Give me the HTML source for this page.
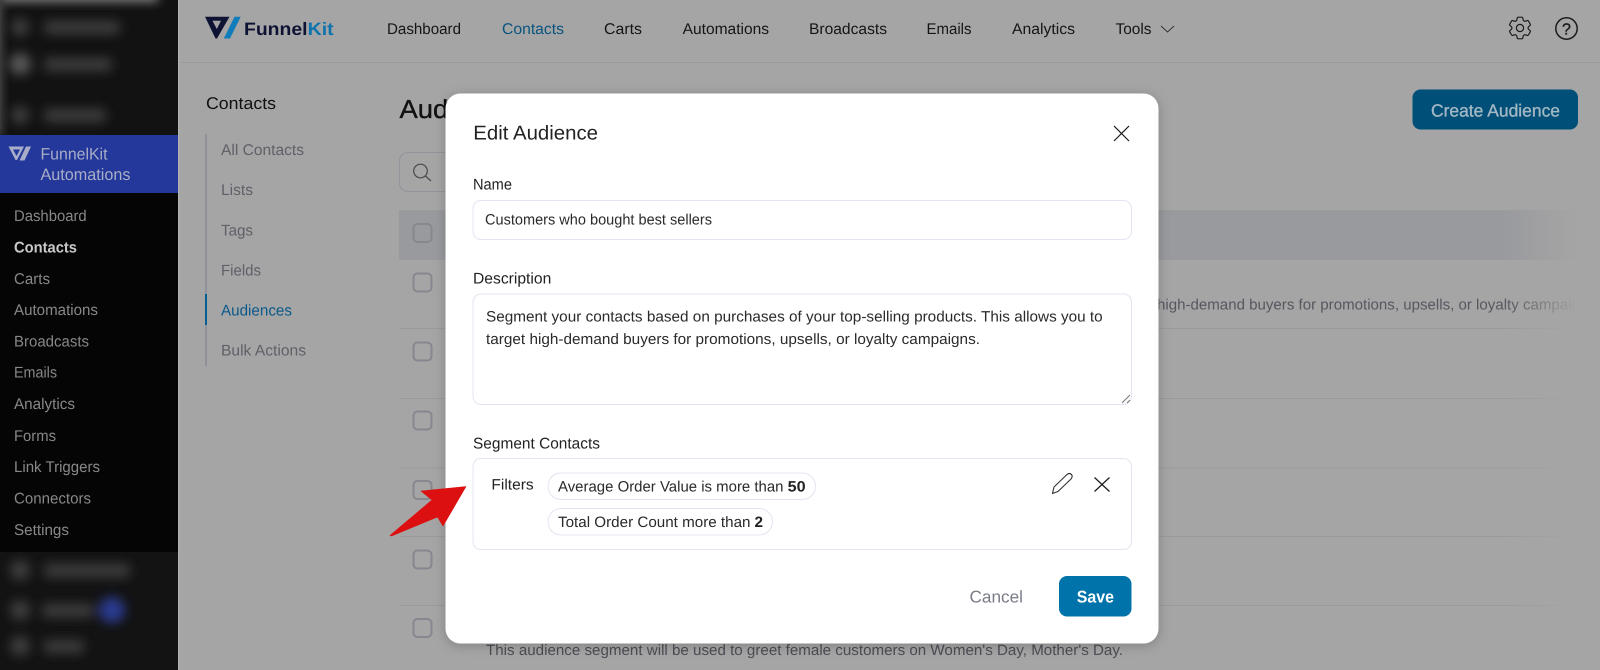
<!DOCTYPE html>
<html><head><meta charset="utf-8"><title>Edit Audience</title>
<style>
html,body{margin:0;padding:0;width:1600px;height:670px;overflow:hidden;background:#a5a5a5}
svg{display:block}
text{font-family:"Liberation Sans",sans-serif;white-space:pre;text-rendering:geometricPrecision}
</style></head><body>
<svg xmlns="http://www.w3.org/2000/svg" width="1600" height="670" viewBox="0 0 1600 670">
<defs>
<filter id="b" x="-30%" y="-30%" width="160%" height="160%"><feGaussianBlur stdDeviation="5.500"/></filter>
<filter id="b2" x="-60%" y="-60%" width="220%" height="220%"><feGaussianBlur stdDeviation="5"/></filter>
<filter id="sh" x="-10%" y="-10%" width="120%" height="120%"><feDropShadow dx="0" dy="2" stdDeviation="6" flood-color="#000" flood-opacity=".22"/></filter>
<clipPath id="top"><rect width="178" height="135"/></clipPath>
<linearGradient id="hd" gradientUnits="userSpaceOnUse" x1="1500" y1="0" x2="1578" y2="0"><stop offset="0" stop-color="#999a9e"/><stop offset="1" stop-color="#a5a5a5"/></linearGradient>
<linearGradient id="ln" gradientUnits="userSpaceOnUse" x1="1500" y1="0" x2="1575" y2="0"><stop offset="0" stop-color="#9a9a9d"/><stop offset="1" stop-color="#a5a5a5"/></linearGradient>
<linearGradient id="tx" gradientUnits="userSpaceOnUse" x1="1505" y1="0" x2="1578" y2="0"><stop offset="0" stop-color="#56575f"/><stop offset="1" stop-color="#a5a5a5"/></linearGradient>
</defs>

<!-- main background -->
<rect width="1600" height="670" fill="#a5a5a5"/>
<rect x="178" y="62" width="1422" height="1" fill="#9b9b9d"/>

<!-- sidebar -->
<rect width="178" height="670" fill="#050505"/>
<rect x="178" width="1.500" height="670" fill="#b0b0b0"/>
<rect width="178" height="135" fill="#121212"/>
<g clip-path="url(#top)">
<rect x="0" y="-12" width="158" height="14" fill="#808080" filter="url(#b2)"/>
<rect x="-12" y="0" width="13" height="135" fill="#5a5a5a" filter="url(#b2)"/>
</g>
<g fill="#3c3c3c" filter="url(#b)">
<circle cx="20" cy="27" r="9"/><rect x="44" y="21" width="76" height="13" rx="4"/>
<circle cx="20" cy="64" r="11" fill="#575757"/><rect x="44" y="58" width="68" height="13" rx="4"/>
<circle cx="20" cy="115" r="9"/><rect x="44" y="109" width="62" height="13" rx="4"/>
</g>
<rect y="135" width="178" height="58" fill="#23389a"/>
<path d="M8.500 146.500H24L17 160H15.500ZM13 149.500L16.500 156L20 149.500Z" fill="#a9adc8" fill-rule="evenodd"/>
<path d="M26 146.500H31L24.500 160.500H19.500Z" fill="#a9adc8"/>
<text x="40.500" y="159.500" font-size="16.500" fill="#a9adc6" textLength="67" lengthAdjust="spacingAndGlyphs">FunnelKit</text>
<text x="40.500" y="180" font-size="16.500" fill="#a9adc6" textLength="90" lengthAdjust="spacingAndGlyphs">Automations</text>
<g font-size="15.500" fill="#888">
<text x="14" y="221" textLength="72.700" lengthAdjust="spacingAndGlyphs">Dashboard</text>
<text x="14" y="252.500" font-weight="700" fill="#c9c9c9" textLength="63" lengthAdjust="spacingAndGlyphs">Contacts</text>
<text x="14" y="284" textLength="36" lengthAdjust="spacingAndGlyphs">Carts</text>
<text x="14" y="315" textLength="84" lengthAdjust="spacingAndGlyphs">Automations</text>
<text x="14" y="346.500" textLength="75" lengthAdjust="spacingAndGlyphs">Broadcasts</text>
<text x="14" y="377.700" textLength="43" lengthAdjust="spacingAndGlyphs">Emails</text>
<text x="14" y="409" textLength="61" lengthAdjust="spacingAndGlyphs">Analytics</text>
<text x="14" y="441" textLength="42" lengthAdjust="spacingAndGlyphs">Forms</text>
<text x="14" y="472" textLength="86" lengthAdjust="spacingAndGlyphs">Link Triggers</text>
<text x="14" y="503.500" textLength="77" lengthAdjust="spacingAndGlyphs">Connectors</text>
<text x="14" y="535" textLength="55" lengthAdjust="spacingAndGlyphs">Settings</text>
</g>
<rect y="552" width="178" height="118" fill="#131313"/>
<g fill="#3c3c3c" filter="url(#b)">
<circle cx="20" cy="570" r="10"/><rect x="44" y="564" width="86" height="13" rx="4"/>
<circle cx="20" cy="610" r="10"/><rect x="42" y="604" width="52" height="13" rx="4"/>
<circle cx="112" cy="610" r="13" fill="#2b3a90"/>
<circle cx="20" cy="646" r="10"/><rect x="44" y="640" width="40" height="13" rx="4"/>
</g>

<!-- top nav -->
<path d="M205 16.700H229.500L217 38.500H215.500ZM212.500 20.800L216.800 29L221 20.800Z" fill="#0e1333" fill-rule="evenodd"/>
<path d="M234.500 16.700H240.700L230 38.500H223.800Z" fill="#0f7dbb"/>
<text x="244" y="35" font-size="18" font-weight="700" fill="#0e1333" textLength="63.500" lengthAdjust="spacingAndGlyphs">Funnel</text>
<text x="307.700" y="35" font-size="18" font-weight="700" fill="#0d73ad" textLength="26" lengthAdjust="spacingAndGlyphs">Kit</text>
<g font-size="15.500" fill="#151515">
<text x="387" y="34" textLength="74" lengthAdjust="spacingAndGlyphs">Dashboard</text>
<text x="502" y="34" fill="#07547f" textLength="62" lengthAdjust="spacingAndGlyphs">Contacts</text>
<text x="604" y="34" textLength="38" lengthAdjust="spacingAndGlyphs">Carts</text>
<text x="682.600" y="34" textLength="86.500" lengthAdjust="spacingAndGlyphs">Automations</text>
<text x="809" y="34" textLength="78" lengthAdjust="spacingAndGlyphs">Broadcasts</text>
<text x="926.500" y="34" textLength="45" lengthAdjust="spacingAndGlyphs">Emails</text>
<text x="1012" y="34" textLength="63" lengthAdjust="spacingAndGlyphs">Analytics</text>
<text x="1115.500" y="34" textLength="36" lengthAdjust="spacingAndGlyphs">Tools</text>
</g>
<path d="M1161 26L1167.500 32L1174 26" fill="none" stroke="#333" stroke-width="1"/>
<g transform="translate(1505.600 13.600) scale(1.200)" fill="none" stroke="#1c1c1c" stroke-width="1">
<path d="M9.594 3.94c.09-.542.56-.94 1.11-.94h2.593c.55 0 1.02.398 1.11.94l.213 1.281c.063.374.313.686.645.87.074.04.147.083.22.127.325.196.72.257 1.075.124l1.217-.456a1.125 1.125 0 0 1 1.37.49l1.296 2.247a1.125 1.125 0 0 1-.26 1.431l-1.003.827c-.293.241-.438.613-.43.992a7.723 7.723 0 0 1 0 .255c-.008.378.137.75.43.991l1.004.827c.424.35.534.955.26 1.43l-1.298 2.247a1.125 1.125 0 0 1-1.369.491l-1.217-.456c-.355-.133-.75-.072-1.076.124a6.47 6.47 0 0 1-.22.128c-.331.183-.581.495-.644.869l-.213 1.281c-.09.543-.56.94-1.11.94h-2.594c-.55 0-1.019-.398-1.11-.94l-.213-1.281c-.062-.374-.312-.686-.644-.87a6.52 6.52 0 0 1-.22-.127c-.325-.196-.72-.257-1.076-.124l-1.217.456a1.125 1.125 0 0 1-1.369-.49l-1.297-2.247a1.125 1.125 0 0 1 .26-1.431l1.004-.827c.292-.24.437-.613.43-.991a6.932 6.932 0 0 1 0-.255c.007-.38-.138-.751-.43-.992l-1.004-.827a1.125 1.125 0 0 1-.26-1.43l1.297-2.247a1.125 1.125 0 0 1 1.37-.491l1.216.456c.356.133.751.072 1.076-.124.072-.044.146-.086.22-.128.332-.183.582-.495.644-.869l.214-1.28Z"/>
<circle cx="12" cy="12" r="3"/>
</g>
<circle cx="1566.500" cy="28.500" r="10.700" fill="none" stroke="#1c1c1c" stroke-width="1.500"/>
<text x="1566.500" y="34.500" font-size="16" fill="#1c1c1c" stroke="#1c1c1c" stroke-width=".35" text-anchor="middle">?</text>

<!-- contacts sub menu -->
<text x="206" y="109" font-size="17" fill="#111" textLength="70" lengthAdjust="spacingAndGlyphs">Contacts</text>
<rect x="205" y="134" width="2" height="232" fill="#8f909a"/>
<rect x="205" y="294" width="2" height="31" fill="#05608f"/>
<g font-size="15.500" fill="#5f6068">
<text x="221" y="155" textLength="83" lengthAdjust="spacingAndGlyphs">All Contacts</text>
<text x="221" y="195" textLength="32" lengthAdjust="spacingAndGlyphs">Lists</text>
<text x="221" y="235.500" textLength="32" lengthAdjust="spacingAndGlyphs">Tags</text>
<text x="221" y="275.500" textLength="40" lengthAdjust="spacingAndGlyphs">Fields</text>
<text x="221" y="315.500" fill="#0a5a8a" textLength="71" lengthAdjust="spacingAndGlyphs">Audiences</text>
<text x="221" y="355.500" textLength="85" lengthAdjust="spacingAndGlyphs">Bulk Actions</text>
</g>

<!-- audiences page behind modal -->
<text x="399.500" y="118" font-size="26" fill="#111" stroke="#111" stroke-width=".35" textLength="128" lengthAdjust="spacingAndGlyphs">Audiences</text>
<rect x="399.500" y="152.500" width="120" height="39" rx="8" fill="none" stroke="#94959c"/>
<circle cx="420.500" cy="171" r="6.800" fill="none" stroke="#4a4a4a" stroke-width="1.200"/>
<path d="M425.500 176L431 181" stroke="#4a4a4a" stroke-width="1.200"/>
<rect x="399" y="210" width="1201" height="50" fill="url(#hd)"/>
<g fill="none" stroke="#86878f" stroke-width="2">
<rect x="413.500" y="224" width="18" height="18" rx="4"/>
<rect x="413.500" y="273.500" width="18" height="18" rx="4"/>
<rect x="413.500" y="342.500" width="18" height="18" rx="4"/>
<rect x="413.500" y="411.500" width="18" height="18" rx="4"/>
<rect x="413.500" y="481" width="18" height="18" rx="4"/>
<rect x="413.500" y="550.500" width="18" height="18" rx="4"/>
<rect x="413.500" y="619" width="18" height="18" rx="4"/>
</g>
<g fill="url(#ln)">
<rect x="399" y="328" width="1201" height="1"/>
<rect x="399" y="398" width="1201" height="1"/>
<rect x="399" y="467.500" width="1201" height="1"/>
<rect x="399" y="536" width="1201" height="1"/>
<rect x="399" y="605" width="1201" height="1"/>
</g>
<text x="1157" y="309.300" font-size="15" fill="url(#tx)" textLength="443" lengthAdjust="spacingAndGlyphs">high-demand buyers for promotions, upsells, or loyalty campaigns.</text>
<text x="486" y="655" font-size="15" fill="#4c4d55" textLength="637" lengthAdjust="spacingAndGlyphs">This audience segment will be used to greet female customers on Women's Day, Mother's Day.</text>

<rect x="1412.500" y="89.500" width="165.500" height="40" rx="8" fill="#004f78"/>
<text x="1431" y="116.700" font-size="17.500" fill="#a3b8c4" stroke="#a3b8c4" stroke-width=".35" textLength="129" lengthAdjust="spacingAndGlyphs">Create Audience</text>

<!-- modal -->
<rect x="445.500" y="93.500" width="713" height="550" rx="15" fill="#fff" filter="url(#sh)"/>
<text x="473.300" y="139.700" font-size="20" fill="#222" textLength="124.700" lengthAdjust="spacingAndGlyphs">Edit Audience</text>
<path d="M1114 126L1129 141M1129 126L1114 141" stroke="#1a1a1a" stroke-width="1.200" fill="none"/>

<text x="473" y="189.700" font-size="15.500" fill="#222" textLength="39" lengthAdjust="spacingAndGlyphs">Name</text>
<rect x="473" y="200.500" width="658.500" height="39" rx="8" fill="#fff" stroke="#e4e4f0"/>
<text x="485" y="224.700" font-size="15" fill="#2a2a2a" textLength="227" lengthAdjust="spacingAndGlyphs">Customers who bought best sellers</text>

<text x="473" y="283.300" font-size="15.500" fill="#222" textLength="78.300" lengthAdjust="spacingAndGlyphs">Description</text>
<rect x="473" y="294" width="658.500" height="110.500" rx="8" fill="#fff" stroke="#e4e4f0"/>
<text x="486" y="321.700" font-size="15" fill="#2a2a2a" textLength="616.700" lengthAdjust="spacingAndGlyphs">Segment your contacts based on purchases of your top-selling products. This allows you to</text>
<text x="486" y="344" font-size="15" fill="#2a2a2a" textLength="494" lengthAdjust="spacingAndGlyphs">target high-demand buyers for promotions, upsells, or loyalty campaigns.</text>
<path d="M1122 403L1130 395M1127 403L1130 400" stroke="#777" stroke-width="1" fill="none"/>

<text x="473" y="448.300" font-size="15.500" fill="#222" textLength="127" lengthAdjust="spacingAndGlyphs">Segment Contacts</text>
<rect x="473" y="458.500" width="658.500" height="91" rx="8" fill="#fff" stroke="#e4e4f0"/>
<text x="491.400" y="489.500" font-size="15" fill="#222" textLength="42.300" lengthAdjust="spacingAndGlyphs">Filters</text>
<rect x="548" y="473" width="267.500" height="26.500" rx="13.250" fill="#fff" stroke="#e4e4f0"/>
<text x="558" y="491.700" font-size="15" fill="#2a2a2a" textLength="225.500" lengthAdjust="spacingAndGlyphs">Average Order Value is more than</text>
<text x="787.600" y="491.700" font-size="15" font-weight="700" fill="#222" textLength="18" lengthAdjust="spacingAndGlyphs">50</text>
<rect x="548" y="508.500" width="224.500" height="26.500" rx="13.250" fill="#fff" stroke="#e4e4f0"/>
<text x="558" y="527" font-size="15" fill="#2a2a2a" textLength="192.500" lengthAdjust="spacingAndGlyphs">Total Order Count more than</text>
<text x="754.500" y="527" font-size="15" font-weight="700" fill="#222" textLength="8.500" lengthAdjust="spacingAndGlyphs">2</text>
<path d="M1052.500 493.500L1054 487L1067 474.500Q1069.500 472.500 1071.500 474.500Q1073 476.500 1071 479L1058 491.500Z" fill="none" stroke="#333" stroke-width="1.100" stroke-linejoin="round"/>
<path d="M1094.500 477.500L1109.500 491.500M1109.500 477.500L1094.500 491.500" stroke="#1a1a1a" stroke-width="1.200" fill="none"/>

<text x="969.500" y="602.700" font-size="17" fill="#7a7c88" textLength="53.500" lengthAdjust="spacingAndGlyphs">Cancel</text>
<rect x="1059" y="576" width="72.500" height="40.500" rx="8" fill="#0073aa"/>
<text x="1076.800" y="602.700" font-size="17" font-weight="700" fill="#fff" textLength="37.200" lengthAdjust="spacingAndGlyphs">Save</text>

<!-- red arrow -->
<path d="M390 535.500L432 500L421 491L466 486.500L443 526L437.500 517L391.500 536Z" fill="#dc1010" stroke="#dc1010" stroke-width=".6" stroke-linejoin="round"/>
</svg>
</body></html>
